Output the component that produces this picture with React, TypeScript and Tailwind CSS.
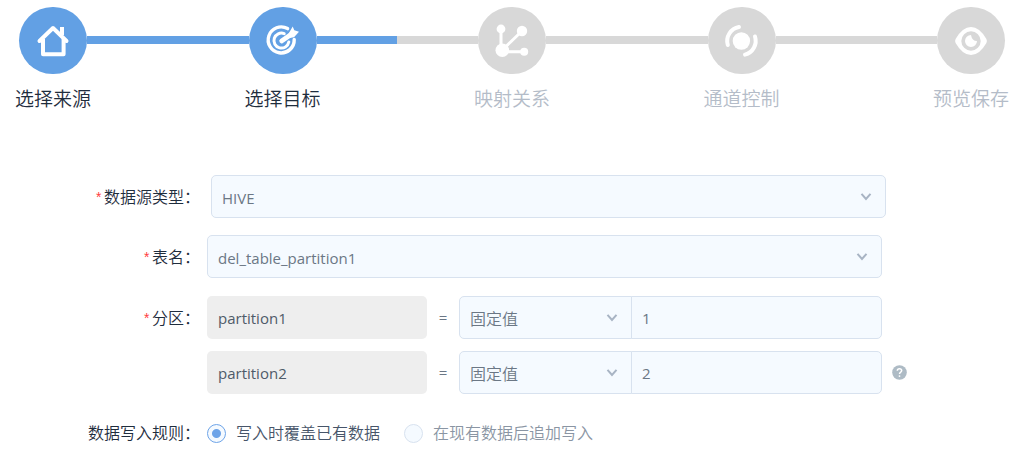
import React, { useState } from 'react';
import clsx from 'clsx';

interface Step {
  title: string;
  icon: React.ReactNode;
}

const HomeIcon = () => (
  <svg viewBox="0 0 68 67" className="w-full h-full" fill="none" stroke="currentColor" strokeWidth="4">
    <path d="M20.5 34L34 21L47.5 34" strokeLinecap="round" strokeLinejoin="round" />
    <path d="M24 32V47.3H44.6V32" strokeLinejoin="round" />
    <path d="M43 20V28" strokeWidth="4" />
  </svg>
);

const TargetIcon = () => (
  <svg viewBox="0 0 68 67" className="w-full h-full" fill="none" stroke="currentColor" strokeLinecap="round">
    <path d="M38.6 21.6A13 13 0 1 0 45.2 32.5" strokeWidth="3.4" />
    <path d="M35.2 26.6A7.5 7.5 0 1 0 39.8 35" strokeWidth="3" />
    <path d="M32.6 34L42 27.5" strokeWidth="4.6" />
    <path d="M38.5 28.5L43.7 19.6L45.3 23.3L50 24.8L45 30.2L40.5 31Z" fill="currentColor" stroke="none" />
  </svg>
);

const MappingIcon = () => (
  <svg viewBox="0 0 68 67" className="w-full h-full" fill="currentColor">
    <path d="M23 22V43M24.3 43L44 24M24.3 44.7H46" stroke="currentColor" strokeWidth="3" />
    <circle cx="24.3" cy="43.2" r="6.8" />
    <circle cx="23" cy="22" r="4.4" />
    <circle cx="44" cy="24" r="5.2" />
    <circle cx="46.2" cy="44.7" r="4" />
  </svg>
);

const ChannelIcon = () => (
  <svg viewBox="0 0 68 67" className="w-full h-full" fill="none" stroke="currentColor" strokeWidth="4" strokeLinecap="round">
    <circle cx="33.4" cy="34" r="8.7" fill="currentColor" stroke="none" />
    <path d="M31 20A14.2 14.2 0 0 0 19.8 38" />
    <path d="M47 29.5A14.2 14.2 0 0 1 37 47.6" />
  </svg>
);

const EyeIcon = () => (
  <svg viewBox="0 0 68 67" className="w-full h-full" fill="currentColor">
    <path
      fillRule="evenodd"
      d="M18.6 32Q25.5 20 34 20T49.4 32Q50.4 34 49.4 36Q42.5 48 34 48T18.6 36Q17.6 34 18.6 32ZM34 24.3A9.7 9.7 0 1 0 34 43.7A9.7 9.7 0 1 0 34 24.3Z"
    />
    <path d="M34 28A6 6 0 1 0 40 34Q35 34 34 28Z" />
  </svg>
);

const steps: Step[] = [
  { title: '选择来源', icon: <HomeIcon /> },
  { title: '选择目标', icon: <TargetIcon /> },
  { title: '映射关系', icon: <MappingIcon /> },
  { title: '通道控制', icon: <ChannelIcon /> },
  { title: '预览保存', icon: <EyeIcon /> },
];

const CURRENT = 1;

const Steps = () => (
  <header className="pt-[7px]">
    <div className="flex items-start pl-[19px] pr-[25px]">
      {steps.map((step, i) => (
        <React.Fragment key={step.title}>
          {i > 0 && (
            <div className="flex-1 h-2 mt-[29px] bg-[#d8d8d8]">
              <div
                className={clsx('h-full bg-[#62a0e4]', {
                  'w-full': i <= CURRENT,
                  'w-1/2': i === CURRENT + 1,
                  'w-0': i > CURRENT + 1,
                })}
              />
            </div>
          )}
          <div className={clsx('w-[68px] h-[67px] shrink-0 rounded-full text-white', i <= CURRENT ? 'bg-[#62a0e4]' : 'bg-[#d8d8d8]')}>
            {step.icon}
          </div>
        </React.Fragment>
      ))}
    </div>
    <ol className="flex justify-between mt-[11px] pl-[15px] pr-[21px] text-[19px] leading-7">
      {steps.map((step, i) => (
        <li key={step.title} className={i <= CURRENT ? 'text-[#1f2d3d]' : 'text-[#b4bcc8]'}>
          {step.title}
        </li>
      ))}
    </ol>
  </header>
);

const Required = () => <span className="mr-px font-['Liberation_Mono'] text-sm text-[#ff4040]">*</span>;

interface SelectProps extends React.SelectHTMLAttributes<HTMLSelectElement> {
  options: string[];
  wrapClass?: string;
}

const Select: React.FC<SelectProps> = ({ options, wrapClass, className, ...rest }) => (
  <div className={clsx('relative', wrapClass)}>
    <select
      className={clsx('block w-full h-[43px] appearance-none border border-[#d8e2ef] bg-[#f5faff] px-[10px] text-[#6b7785] outline-none', className)}
      {...rest}
    >
      {options.map((o) => (
        <option key={o}>{o}</option>
      ))}
    </select>
    <svg viewBox="0 0 12 8" className="absolute right-[14px] top-[18px] w-3 h-2 pointer-events-none" fill="none" stroke="#a8b4c4" strokeWidth="2">
      <path d="M1.5 0.8L6 6L10.5 0.8" />
    </svg>
  </div>
);

const row = 'grid grid-cols-[200px_minmax(0,1fr)_141px] gap-x-[7px] items-center';

const partitions = [
  { name: 'partition1', value: '1' },
  { name: 'partition2', value: '2' },
];

const rules = [
  { id: 'overwrite', text: '写入时覆盖已有数据' },
  { id: 'append', text: '在现有数据后追加写入' },
];

export default function App() {
  const [rule, setRule] = useState('overwrite');

  return (
    <main className="bg-white text-base font-[350] font-['Open_Sans','Noto_Sans_CJK_SC',sans-serif]">
      <Steps />
      <form className="mt-[62px]">
        <div className={row}>
          <label htmlFor="type" className="text-right text-[#1f2d3d]">
            <Required />数据源类型：
          </label>
          <Select id="type" options={['HIVE']} wrapClass="ml-1 -mr-1" className="rounded-[5px] pt-1 text-[15px] font-normal" />
        </div>

        <div className={clsx(row, 'mt-[17px]')}>
          <label htmlFor="table" className="text-right text-[#1f2d3d]">
            <Required />表名：
          </label>
          <Select id="table" options={['del_table_partition1']} className="rounded-[5px] pt-1 text-[15px] font-normal" />
        </div>

        <div className="mt-[18px] flex flex-col gap-3">
          {partitions.map((p, i) => (
            <div key={p.name} className={row}>
              <span className="text-right text-[#1f2d3d]">
                {i === 0 && <><Required />分区：</>}
              </span>
              <div className="flex items-center">
                <input
                  readOnly
                  aria-label={`分区 ${p.name}`}
                  defaultValue={p.name}
                  className="w-[220px] h-[43px] rounded-[5px] bg-[#eeeeee] px-[11px] text-[15px] font-normal text-[#4f5b69] outline-none"
                />
                <span className="w-8 text-center text-[15px] font-normal text-[#6b7785]">=</span>
                <Select aria-label={`${p.name} 类型`} options={['固定值']} wrapClass="w-[173px]" className="rounded-l-[5px] pt-0.5" />
                <input
                  aria-label={`${p.name} 值`}
                  defaultValue={p.value}
                  className="flex-1 min-w-0 h-[43px] -ml-px rounded-r-[5px] border border-[#d8e2ef] bg-[#f5faff] px-[10px] text-[15px] font-normal text-[#6b7785] outline-none"
                />
              </div>
              {i === partitions.length - 1 && (
                <button type="button" aria-label="帮助" className="ml-[3px] w-[15px] h-[15px]">
                  <svg viewBox="0 0 15 15" className="w-full h-full">
                    <circle cx="7.5" cy="7.5" r="7.3" fill="#aebbc5" />
                    <path d="M5.3 5.8Q5.4 3.7 7.5 3.7T9.7 5.6Q9.7 6.6 8.5 7.3Q7.5 7.9 7.5 9" fill="none" stroke="#fff" strokeWidth="1.5" />
                    <circle cx="7.5" cy="11.1" r="0.9" fill="#fff" />
                  </svg>
                </button>
              )}
            </div>
          ))}
        </div>

        <div className={clsx(row, 'mt-[27px]')} role="radiogroup" aria-labelledby="rule-label">
          <span id="rule-label" className="text-right text-[#1f2d3d]">数据写入规则：</span>
          <div className="flex items-center gap-6">
            {rules.map((r) => (
              <label key={r.id} className={clsx('flex items-center gap-[10px]', rule === r.id ? 'text-[#475569]' : 'text-[#8a95a3]')}>
                <input
                  type="radio"
                  name="rule"
                  checked={rule === r.id}
                  onChange={() => setRule(r.id)}
                  className="w-[19px] h-[19px] appearance-none rounded-full border border-[#d8e2ef] bg-[#f5faff] checked:border-[#6ea4e8] checked:bg-[radial-gradient(circle,#6ea4e8_4px,#f5faff_5px)]"
                />
                {r.text}
              </label>
            ))}
          </div>
        </div>
      </form>
    </main>
  );
}
